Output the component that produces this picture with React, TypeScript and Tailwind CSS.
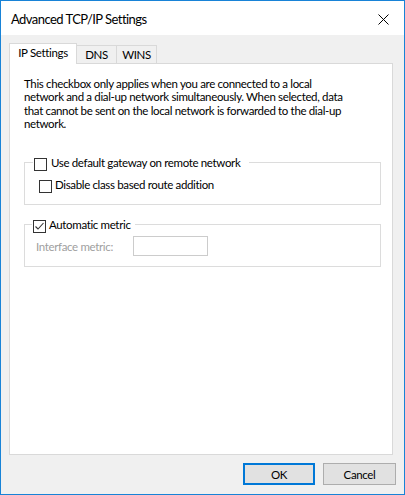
import React from "react";

const font = { fontFamily: "Lato, 'Liberation Sans', sans-serif" };

function Box({ checked }: { checked?: boolean }) {
  return (
    <span className="flex h-[13px] w-[13px] shrink-0 items-center justify-center border border-[#333333] bg-white">
      {checked ? (
        <svg width="11" height="11" viewBox="0 0 11 11">
          <polyline points="1.5,5.5 4,8 9.5,2" fill="none" stroke="#333333" strokeWidth="1.1" />
        </svg>
      ) : null}
    </span>
  );
}

export default function App() {
  return (
    <div
      className="flex h-[495px] w-[405px] flex-col border border-[#1883d7] bg-[#f0f0f0] text-[11.5px] leading-[13px] tracking-[-0.35px] text-black"
      style={font}
    >
      {/* title bar */}
      <div className="flex h-[34px] shrink-0 items-start justify-between bg-white">
        <div className="ml-[10px] mt-[10px] text-[13px] leading-[17px] tracking-[-0.55px]">Advanced TCP/IP Settings</div>
        <svg className="mr-[15px] mt-[13px]" width="11" height="11" viewBox="0 0 11 11">
          <path d="M0.5 0.5 L10.5 10.5 M10.5 0.5 L0.5 10.5" stroke="#000" strokeWidth="1" />
        </svg>
      </div>

      {/* body */}
      <div className="flex flex-1 flex-col px-[8px] pt-[8px]">
        {/* tabs */}
        <div className="flex h-[20px] items-end">
          <div className="relative z-10 mb-[-1px] h-[21px] w-[68px] border-l border-r border-t border-[#d9d9d9] bg-white pt-[2px] text-center">
            IP Settings
          </div>
          <div className="h-[18px] w-[40px] border-r border-t border-[#d9d9d9] pt-[2px] text-center">DNS</div>
          <div className="h-[18px] w-[40px] border-r border-t border-[#d9d9d9] pt-[2px] text-center">WINS</div>
        </div>

        {/* panel */}
        <div className="flex h-[392px] w-[384px] flex-col border border-[#d9d9d9] bg-white pl-[14px] pr-[11px] pt-[13px]">
          <p className="leading-[13.33px]">
            This checkbox only applies when you are connected to a local
            <br />
            network and a dial-up network simultaneously. When selected, data
            <br />
            that cannot be sent on the local network is forwarded to the dial-up
            <br />
            network.
          </p>

          {/* group 1 */}
          <div className="mt-[28px] flex flex-col">
            <div className="relative z-10 ml-[9px] flex h-[13px] items-start self-start bg-white pl-[1px] pr-[9px]">
              <Box />
              <span className="ml-[4px] mt-[-2px] whitespace-nowrap">Use default gateway on remote network</span>
            </div>
            <div className="mt-[-9px] border border-[#dcdcdc] pb-[11px] pl-[14px] pt-[17px]">
              <div className="flex h-[13px] items-start">
                <Box />
                <span className="ml-[3px] mt-[-2px]">Disable class based route addition</span>
              </div>
            </div>
          </div>

          {/* group 2 */}
          <div className="mt-[15px] flex flex-col">
            <div className="relative z-10 ml-[8px] flex h-[13px] items-start self-start bg-white pl-[1px] pr-[4px]">
              <Box checked />
              <span className="ml-[3px] mt-[-2px] whitespace-nowrap">Automatic metric</span>
            </div>
            <div className="mt-[-9px] border border-[#dcdcdc] pb-[10px] pl-[11px] pt-[11px]">
              <div className="flex items-center">
                <span className="w-[97px] text-[#a0a0a0]">Interface metric:</span>
                <div className="h-[20px] w-[75px] border border-[#cccccc] bg-white" />
              </div>
            </div>
          </div>
        </div>

        {/* buttons */}
        <div className="mt-[8px] flex justify-end gap-[8px]">
          <button className="flex h-[22px] w-[72px] items-center justify-center border-2 border-[#0078d7] bg-[#e1e1e1]">
            OK
          </button>
          <button className="flex h-[22px] w-[73px] items-center justify-center border border-[#adadad] bg-[#e1e1e1]">
            Cancel
          </button>
        </div>
      </div>
    </div>
  );
}
